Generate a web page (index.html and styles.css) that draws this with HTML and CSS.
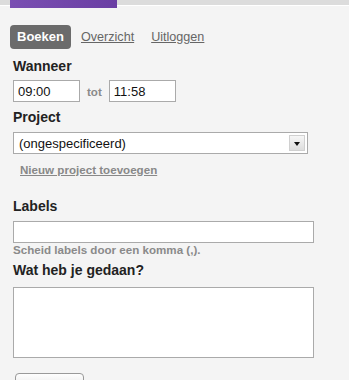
FILE: index.html
```html
<!doctype html>
<html>
<head>
<meta charset="utf-8">
<title>Boeken</title>
<link rel="stylesheet" href="styles.css">
</head>

<body>
<div class="top">
	<div class="logo"></div>
</div>

<ul class="nav">
	<li><a class="on" href="#">Boeken</a></li>
	<li><a href="#">Overzicht</a></li>
	<li><a href="#">Uitloggen</a></li>
</ul>

<form class="book">
	<label class="lbl first">Wanneer</label>
	<div class="when">
		<input class="time" type="text" value="09:00">
		<span class="tot">tot</span>
		<input class="time" type="text" value="11:58">
	</div>

	<label class="lbl">Project</label>
	<div class="sel">
		<select>
			<option>(ongespecificeerd)</option>
		</select>
		<span class="arrow"></span>
	</div>
	<a class="addlink" href="#">Nieuw project toevoegen</a>

	<label class="lbl labels">Labels</label>
	<input class="wide" type="text">
	<p class="hint">Scheid labels door een komma (,).</p>

	<label class="lbl done">Wat heb je gedaan?</label>
	<textarea class="what"></textarea>

	<button class="save" type="button">Opslaan</button>
</form>
</body>
</html>
```

FILE: styles.css
```css
*{ margin:0; padding:0; list-style:none; box-sizing:border-box;}
body{ background:#f4f4f4; font-family:"Liberation Sans", Arial, sans-serif; color:#222;}

.top{ height:6px; background:#dcdcdc; border-bottom:1px solid #fff;}
.top .logo{ width:107px; height:8px; margin-left:10px; background:linear-gradient(to right,#7a4fb2,#6a3ea3);}

.nav{ display:flex; margin:19px 0 0 10px;}
.nav li{ margin-right:3px;}
.nav a{ display:block; padding:5px 7px; line-height:14px; font-size:12.6px; color:#666; border-radius:4px;}
.nav a.on{ background:#6b6b6b; color:#fff; font-weight:bold; font-size:13px; text-decoration:none;}

.book{ padding:0 13px; display:flex; flex-direction:column; align-items:flex-start;}
.lbl{ display:block; font-size:14px; line-height:17px; font-weight:bold; margin-top:7px;}
.lbl.first{ margin-top:9px;}
.lbl.labels{ margin-top:21px;}
.lbl.done{ margin-top:5px;}

input, textarea, select{ font-family:"Liberation Sans", Arial, sans-serif; font-size:13px; color:#111; background:#fff; border:1px solid #aaa; outline:none;}

.when{ display:flex; align-items:center; margin-top:5px;}
.time{ width:67px; height:22px; padding:0 4px;}
.tot{ margin:0 7px; font-size:11.6px; font-weight:bold; color:#8a8a8a;}

.sel{ position:relative; margin-top:6px; width:295px;}
.sel select{ display:block; width:100%; height:22px; padding:0 5px; -webkit-appearance:none; appearance:none; border-radius:0;}
.sel .arrow{ position:absolute; right:3px; top:3px; width:16px; height:16px; background:linear-gradient(#f6f6f6,#dedede); border:1px solid #d0d0d0; pointer-events:none;}
.sel .arrow:after{ content:""; position:absolute; left:4px; top:6px; border-left:3px solid transparent; border-right:3px solid transparent; border-top:4px solid #111;}

.addlink{ margin:9px 0 0 7px; font-size:11.6px; line-height:14px; font-weight:bold; color:#888;}

.wide{ width:301px; height:22px; margin-top:6px; padding:0 4px;}
.hint{ font-size:11.6px; line-height:14px; font-weight:bold; color:#8a8a8a;}

.what{ width:301px; height:71px; margin-top:8px; resize:none; padding:3px;}

.save{ margin:15px 0 0 2px; width:69px; height:24px; font-family:"Liberation Sans", Arial, sans-serif; font-size:13px; color:#111; border:1px solid #999; border-radius:4px; background:linear-gradient(#fdfdfd,#dcdcdc);}
```
